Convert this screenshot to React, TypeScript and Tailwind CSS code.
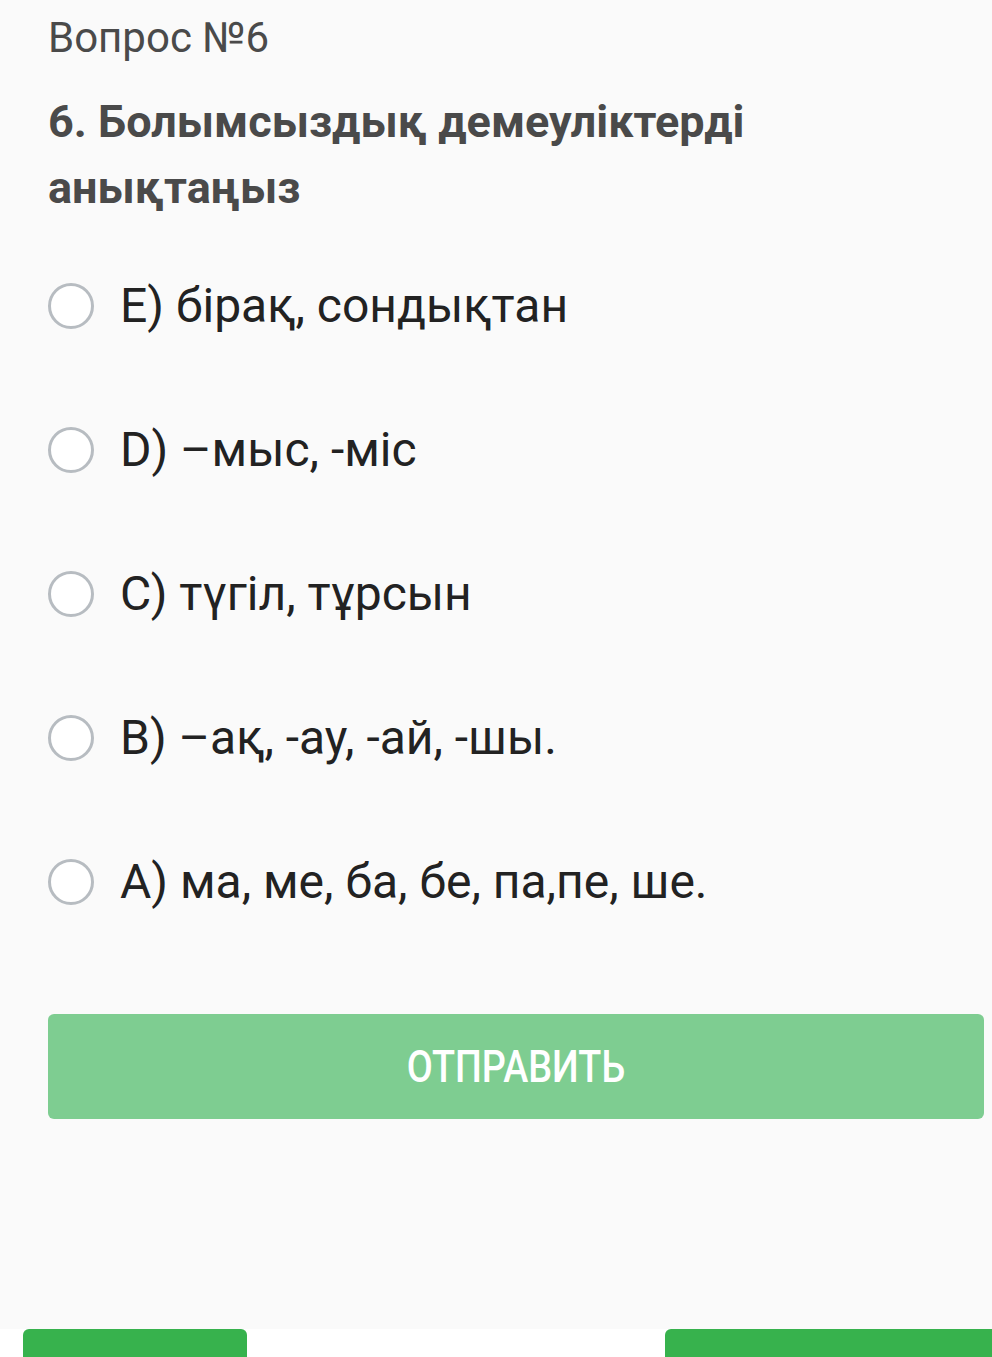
const options = [
  'E) бірақ, сондықтан',
  'D) –мыс, -міс',
  'C) түгіл, тұрсын',
  'B) –ақ, -ау, -ай, -шы.',
  'A) ма, ме, ба, бе, па,пе, ше.',
];

export default function App() {
  return (
    <div className="w-[992px] h-[1357px] overflow-hidden bg-[#fafafa] font-['Roboto',sans-serif] flex flex-col">
      <div className="px-12 pt-[14px] flex-1">
        <div className="text-[42px] leading-[48px] text-[#4a4a4a]">Вопрос №6</div>
        <h1 className="mt-[27px] text-[45px] leading-[66px] font-bold text-[#4a4a4a]">
          6. Болымсыздық демеуліктерді
          <br />
          анықтаңыз
        </h1>
        <div className="mt-[13px] flex flex-col">
          {options.map((o) => (
            <label key={o} className="flex items-center h-[144px] gap-[26px]">
              <span className="w-[46px] h-[46px] rounded-full border-[3px] border-[#b7bcc1] bg-white shrink-0" />
              <span className="text-[48px] text-[#222]">{o}</span>
            </label>
          ))}
        </div>
        <button className="mt-[60px] w-[936px] h-[105px] rounded-[6px] bg-[#7ecd91] text-white text-[45px] font-medium">
          <span className="inline-block scale-x-[0.84]">ОТПРАВИТЬ</span>
        </button>
      </div>
      <div className="h-[28px] bg-white flex justify-between pl-[23px]">
        <div className="w-[224px] h-full bg-[#37b24d] rounded-t-[6px]" />
        <div className="w-[327px] h-full bg-[#37b24d] rounded-tl-[6px]" />
      </div>
    </div>
  );
}
